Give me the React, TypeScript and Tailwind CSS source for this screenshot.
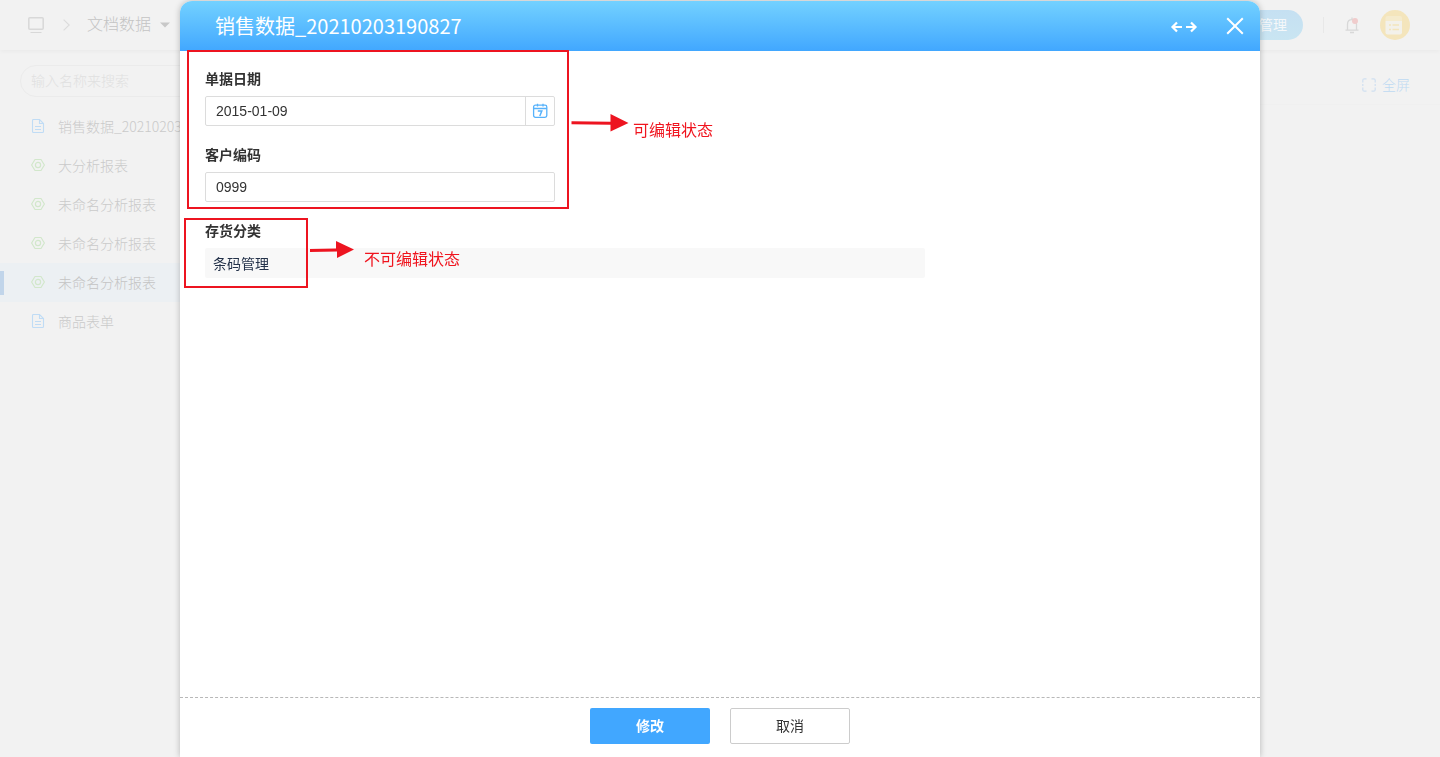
import { useState } from 'react'

const documents = [
  { id: 1, name: '销售数据_20210203190827', type: 'form' },
  { id: 2, name: '大分析报表', type: 'report' },
  { id: 3, name: '未命名分析报表', type: 'report' },
  { id: 4, name: '未命名分析报表', type: 'report' },
  { id: 5, name: '未命名分析报表', type: 'report' },
  { id: 6, name: '商品表单', type: 'form' }
]

function FormIcon() {
  return (
    <svg className="w-4 h-4 shrink-0" viewBox="0 0 16 16" fill="none" stroke="#c0dcf5" strokeWidth="1.1">
      <path d="M2.5 1.5Q2.5 0.5 3.5 0.5H9.5L13.5 4.5V12.5Q13.5 13.5 12.5 13.5H3.5Q2.5 13.5 2.5 12.5Z" />
      <path d="M9.5 0.5V4.5H13.5M5 7.5H11M5 10.5H11" />
    </svg>
  )
}

function ReportIcon() {
  return (
    <svg className="w-4 h-4 shrink-0" viewBox="0 0 16 16" fill="none" stroke="#d2e7cb" strokeWidth="1.2">
      <path d="M5 1.5H11L14.4 7L11 12.5H5L1.6 7Z" strokeLinejoin="round" />
      <circle cx="8" cy="7" r="2.6" />
    </svg>
  )
}

function CalendarIcon() {
  return (
    <svg className="w-4 h-4" viewBox="0 0 16 16" fill="none" stroke="#57b2fb" strokeWidth="1.3">
      <rect x="1.6" y="2.1" width="13.2" height="12.3" rx="1.8" />
      <path d="M1.6 5.5H14.8M5.5 0.8V3.5M11 0.8V3.5" />
      <path d="M5.8 8H9.8L7.8 13" strokeWidth="1.5" />
    </svg>
  )
}

function TopBar() {
  return (
    <header className="flex items-center justify-between h-[50px] mb-px pl-7 pr-[30px] shadow-[0_2px_4px_rgba(0,0,0,0.03)]">
      <div className="flex items-center text-[#c4c4c4]">
        <svg className="w-4 h-[18px]" viewBox="0 0 16 18" fill="none" stroke="#d8d8d8" strokeWidth="1.5">
          <rect x="0.8" y="1.8" width="14.4" height="11.4" rx="1" />
          <path d="M2.5 16.5H13.5" strokeWidth="1" />
        </svg>
        <svg className="w-[7px] h-3 ml-[19px]" viewBox="0 0 7 12" fill="none" stroke="#dcdcdc" strokeWidth="1.2">
          <path d="M0.6 0.6L6.2 6L0.6 11.4" />
        </svg>
        <button type="button" className="flex items-center gap-[9px] ml-[17px] text-base font-light">
          文档数据
          <svg className="w-[10px] h-[6px]" viewBox="0 0 10 6" fill="#c8c8c8">
            <path d="M0 0.5H10L5 5.5Z" />
          </svg>
        </button>
      </div>
      <div className="flex items-center">
        <button
          type="button"
          className="h-[30px] px-4 rounded-full bg-linear-to-b from-[#c5e0f2] to-[#c9e5f2] text-sm text-[#f5f8fa]"
        >
          管理
        </button>
        <span className="w-px h-4 ml-5 bg-[#e8e8e8]" />
        <button type="button" aria-label="通知" className="ml-5">
          <svg className="w-4 h-[18px]" viewBox="0 0 16 18" fill="none" stroke="#d8d8d8" strokeWidth="1.3">
            <path d="M1.5 14.2H14.5M3.5 14V8.5Q3.5 3.7 8 3.7Q12.5 3.7 12.5 8.5V14M8 1.5V3.5M6 16.5H10" />
            <circle cx="11" cy="5" r="3" fill="#f0cccc" stroke="none" />
          </svg>
        </button>
        <svg className="w-[30px] h-[30px] ml-5" viewBox="0 0 30 30">
          <circle cx="15" cy="15" r="15" fill="#f4e5bc" />
          <path d="M5.5 11V8Q5.5 6 7.5 6H20Q22 6 22 8V11Z" fill="#f5ebcd" />
          <path d="M5.5 11H22V22.5Q22 24.5 20 24.5H7.5Q5.5 24.5 5.5 22.5Z" fill="#f3f1ea" />
          <path d="M9 15H11M12.5 15H19M9 19.5H11M12.5 19.5H19" stroke="#f4e5bc" strokeWidth="1.6" />
        </svg>
      </div>
    </header>
  )
}

function Sidebar() {
  return (
    <aside className="w-[260px] shrink-0 pt-[14px]">
      <div className="px-5">
        <input
          type="search"
          aria-label="搜索"
          placeholder="输入名称来搜索"
          className="w-full h-8 px-[10px] rounded-full border border-[#ebebeb] text-sm font-light placeholder:text-[#e0e0e0]"
        />
      </div>
      <nav className="mt-[10px] font-['Noto_Sans_CJK_SC',sans-serif]">
        {documents.map((doc) => (
          <a
            key={doc.id}
            href={`#doc-${doc.id}`}
            className={
              doc.id === 5
                ? 'flex items-center gap-3 h-[39px] bg-[#ecf0f3] text-sm font-light text-[#c4c4c4]'
                : 'flex items-center gap-3 h-[39px] text-sm font-light text-[#cacaca]'
            }
          >
            <span className={doc.id === 5 ? 'w-1 h-6 mr-[14px] shrink-0 bg-[#c1d5ea]' : 'w-1 h-6 mr-[14px] shrink-0'} />
            {doc.type === 'form' ? <FormIcon /> : <ReportIcon />}
            <span className="pb-0.5 whitespace-nowrap">{doc.name}</span>
          </a>
        ))}
      </nav>
    </aside>
  )
}

function Annotations() {
  return (
    <div className="pointer-events-none text-base leading-6 text-[#f0141e]">
      <div className="absolute left-[7px] top-[49px] w-[382px] h-[159px] border-2 border-[#ed1420]" />
      <svg className="absolute left-[391px] top-[112px] w-[58px] h-5" viewBox="0 0 58 20" fill="#ed1420">
        <path d="M0.5 8.2L39.5 8.8V1L57.5 10L39.5 18.5V11.8L0.5 11.2Z" />
      </svg>
      <span className="absolute left-[453px] top-[118px] whitespace-nowrap">可编辑状态</span>

      <div className="absolute left-[4px] top-[217px] w-[124px] h-[70px] border-2 border-[#ed1420]" />
      <svg className="absolute left-[129px] top-[239px] w-[46px] h-5" viewBox="0 0 46 20" fill="#ed1420">
        <path d="M1 9L27 8.4V1L45 9.5L28 18V11.4L1 12Z" />
      </svg>
      <span className="absolute left-[184px] top-[247px] whitespace-nowrap">不可编辑状态</span>
    </div>
  )
}

function EditDialog({ onClose }: { onClose: () => void }) {
  const [date, setDate] = useState('2015-01-09')
  const [code, setCode] = useState('0999')

  return (
    <div
      role="dialog"
      aria-labelledby="dialog-title"
      className="relative flex flex-col w-3/4 mt-px rounded-t-xl bg-white shadow-[0_0_6px_rgba(0,0,0,0.25)]"
    >
      <div className="flex items-center justify-between h-[50px] shrink-0 pl-[35px] pr-4 rounded-t-xl bg-linear-to-b from-[#73d1ff] to-[#41a7ff] text-white">
        <h2 id="dialog-title" className="font-['Noto_Sans_CJK_SC',sans-serif] text-xl">
          销售数据_20210203190827
        </h2>
        <div className="flex items-center gap-7">
          <button type="button" aria-label="展开">
            <svg className="w-7 h-[14px]" viewBox="0 0 28 14" fill="none" stroke="currentColor" strokeWidth="2.2">
              <path d="M12 8H2.5M7 3.5L2.5 8L7 12.5M16 8H25.5M21 3.5L25.5 8L21 12.5" />
            </svg>
          </button>
          <button type="button" aria-label="关闭" onClick={onClose}>
            <svg className="w-[18px] h-[18px]" viewBox="0 0 18 18" fill="none" stroke="currentColor" strokeWidth="2">
              <path d="M1.2 1.2L16.8 16.8M16.8 1.2L1.2 16.8" />
            </svg>
          </button>
        </div>
      </div>

      <form className="flex-1 flex flex-col gap-[17px] px-[25px] pt-4 text-sm text-[#333]">
        <div>
          <label htmlFor="date" className="block h-6 mb-[5px] leading-6 font-bold">
            单据日期
          </label>
          <div className="flex w-[350px] h-[30px] border border-[#dcdcdc] rounded-xs">
            <input
              id="date"
              value={date}
              onChange={(e) => setDate(e.target.value)}
              className="flex-1 min-w-0 px-[10px] outline-none"
            />
            <button
              type="button"
              aria-label="选择日期"
              className="flex items-center justify-center w-[29px] border-l border-[#dcdcdc]"
            >
              <CalendarIcon />
            </button>
          </div>
        </div>
        <div>
          <label htmlFor="code" className="block h-6 mb-[5px] leading-6 font-bold">
            客户编码
          </label>
          <input
            id="code"
            value={code}
            onChange={(e) => setCode(e.target.value)}
            className="block w-[350px] h-[30px] px-[10px] border border-[#dcdcdc] rounded-xs outline-none"
          />
        </div>
        <div>
          <label htmlFor="category" className="block h-6 mb-[5px] leading-6 font-bold">
            存货分类
          </label>
          <input
            id="category"
            readOnly
            value="条码管理"
            className="block w-[720px] max-w-full h-[30px] px-2 bg-[#f8f8f8] text-[#24324a] rounded-xs outline-none"
          />
        </div>
      </form>

      <div className="flex justify-center gap-5 h-[60px] shrink-0 pt-[10px] border-t border-dashed border-[#b8b8b8] text-sm">
        <button type="button" className="w-[120px] h-9 rounded-xs bg-[#41a7ff] font-bold text-white">
          修改
        </button>
        <button
          type="button"
          onClick={onClose}
          className="w-[120px] h-9 rounded-xs border border-[#ccc] bg-white text-[#333]"
        >
          取消
        </button>
      </div>

      <Annotations />
    </div>
  )
}

export default function App() {
  const [open, setOpen] = useState(true)

  return (
    <div className="min-h-screen bg-[#f2f2f2] font-['Liberation_Sans','Noto_Sans_CJK_SC',sans-serif]">
      <TopBar />
      <div className="flex">
        <Sidebar />
        <main className="flex-1">
          <div className="flex items-center justify-end h-[54px] pt-[14px] pr-[30px] border-b border-[#f0f0f0]">
            <button type="button" className="flex items-center gap-[6px] text-sm font-light text-[#bfdaf2]">
              <svg className="w-[14px] h-[14px]" viewBox="0 0 14 14" fill="none" stroke="#cfdff0" strokeWidth="1.2">
                <path d="M0.8 4.5V2.3Q0.8 0.8 2.3 0.8H4.5M9.5 0.8H11.7Q13.2 0.8 13.2 2.3V4.5M13.2 9.5V11.7Q13.2 13.2 11.7 13.2H9.5M4.5 13.2H2.3Q0.8 13.2 0.8 11.7V9.5M0.8 6V8M13.2 6V8" />
              </svg>
              全屏
            </button>
          </div>
        </main>
      </div>

      {open && (
        <div className="fixed inset-0 z-10 flex justify-center overflow-hidden">
          <EditDialog onClose={() => setOpen(false)} />
        </div>
      )}
    </div>
  )
}
